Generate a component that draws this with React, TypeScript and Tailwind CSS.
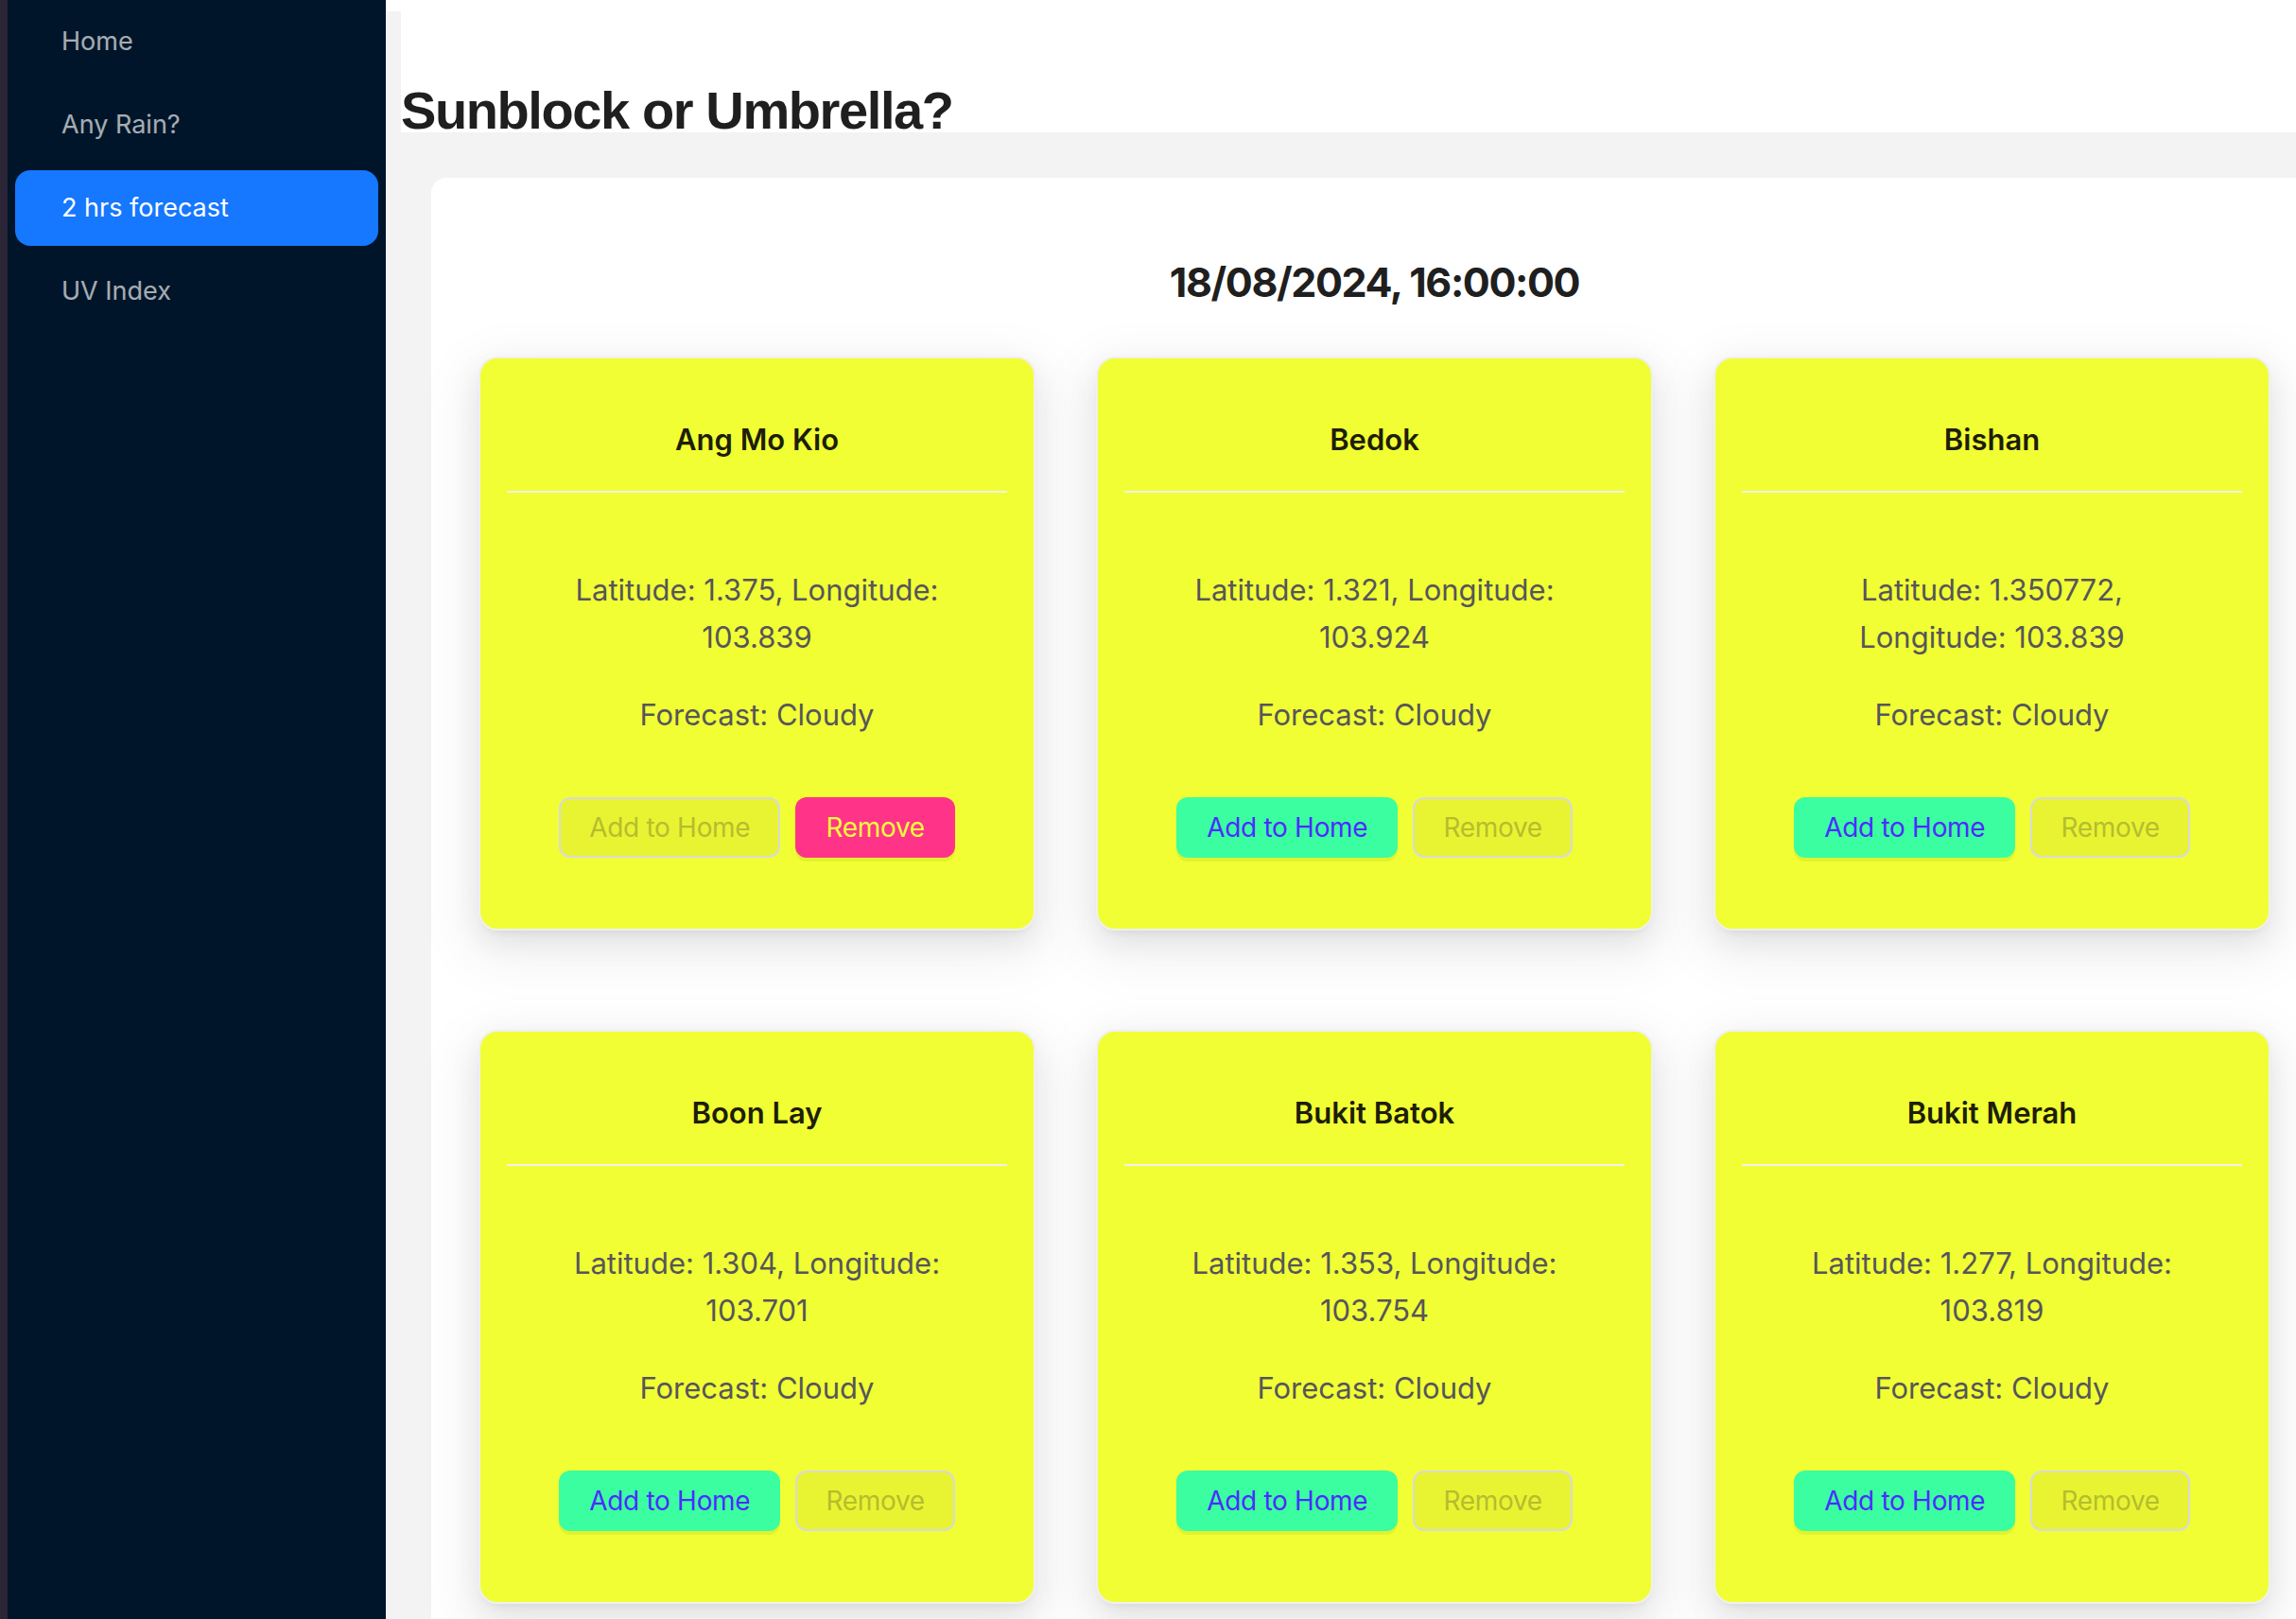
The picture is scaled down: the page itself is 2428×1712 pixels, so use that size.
const places = [
  { name: "Ang Mo Kio", lat: "1.375", lng: "103.839", saved: true },
  { name: "Bedok", lat: "1.321", lng: "103.924", saved: false },
  { name: "Bishan", lat: "1.350772", lng: "103.839", saved: false },
  { name: "Boon Lay", lat: "1.304", lng: "103.701", saved: false },
  { name: "Bukit Batok", lat: "1.353", lng: "103.754", saved: false },
  { name: "Bukit Merah", lat: "1.277", lng: "103.819", saved: false },
];

const menu = ["Home", "Any Rain?", "2 hrs forecast", "UV Index"];

function PlaceCard({ name, lat, lng, saved }: { name: string; lat: string; lng: string; saved: boolean }) {
  const btn = "h-[64px] shrink-0 whitespace-nowrap rounded-[12px] border-2 px-[30px] text-[28px] leading-none tracking-[-0.3px]";
  const off = "border-[#d9d9d9] bg-[#e8f432] text-[#b6bd2e]";
  return (
    <div className="flex h-[607px] flex-col rounded-[20px] border-2 border-[#f0f0f0] bg-[#f1fe34] shadow-[0_12px_32px_0_rgba(0,0,0,0.08),0_6px_12px_-8px_rgba(0,0,0,0.12),0_18px_56px_16px_rgba(0,0,0,0.05)]">
      <div className="mx-[28px] border-b-2 border-[#f0f0f0] pt-[70px] pb-[39px] text-center text-[31px] font-semibold leading-none text-[#1d1e06]">
        {name}
      </div>
      <div className="px-[80px] pt-[78px] text-center text-[31px] leading-[50px] text-[#56565a]">
        <p>
          Latitude: {lat}, Longitude: {lng}
        </p>
        <p className="mt-[32px]">Forecast: Cloudy</p>
        <div className="mt-[62px] flex justify-center gap-[16px]">
          <button className={`${btn} ${saved ? off : "border-transparent bg-[#3afea0] text-[#4b2cff] shadow-[0_4px_0_rgba(120,160,0,0.12)]"}`}>
            Add to Home
          </button>
          <button className={`${btn} ${saved ? "border-transparent bg-[#ff3388] text-[#f2fb3b] shadow-[0_4px_0_rgba(120,160,0,0.12)]" : off}`}>
            Remove
          </button>
        </div>
      </div>
    </div>
  );
}

export default function App() {
  return (
    <div className="flex h-[1712px] w-full overflow-hidden bg-white font-['Inter','Noto_Sans',sans-serif]">
      <div className="w-[8px] shrink-0 bg-[#2b2536]" />
      <aside className="flex w-[400px] shrink-0 flex-col gap-[8px] bg-[#001529] pt-[4px]">
        {menu.map((m) => (
          <div
            key={m}
            className={`mx-[8px] flex h-[80px] items-center rounded-[16px] pl-[49px] text-[27px] ${
              m === "2 hrs forecast" ? "bg-[#1677ff] text-white" : "text-white/65"
            }`}
          >
            {m}
          </div>
        ))}
      </aside>

      <main className="flex min-w-0 flex-1 flex-col pt-[12px]">
        <div className="flex flex-1 flex-col bg-[#f3f3f3]">
          <header className="ml-[16px] h-[128px] shrink-0 bg-white">
            <h1 className="mt-[77px] font-['Liberation_Sans','Arial',sans-serif] text-[56px] font-bold leading-none tracking-[-1.4px] text-[#1f1f1f]">
              Sunblock or Umbrella?
            </h1>
          </header>
          <div className="flex-1 pt-[48px] pl-[48px]">
            <section className="h-full w-[1995px] rounded-t-[16px] bg-white px-[50px] pt-[89px]">
              <h2 className="text-center text-[43px] font-bold leading-none tracking-[-1.4px] text-[#1f1f1f]">18/08/2024, 16:00:00</h2>
              <div className="mt-[57px] grid grid-cols-[589px_589px_589px] gap-x-[64px] gap-y-[105px]">
                {places.map((p) => (
                  <PlaceCard key={p.name} {...p} />
                ))}
              </div>
            </section>
          </div>
        </div>
      </main>
    </div>
  );
}
